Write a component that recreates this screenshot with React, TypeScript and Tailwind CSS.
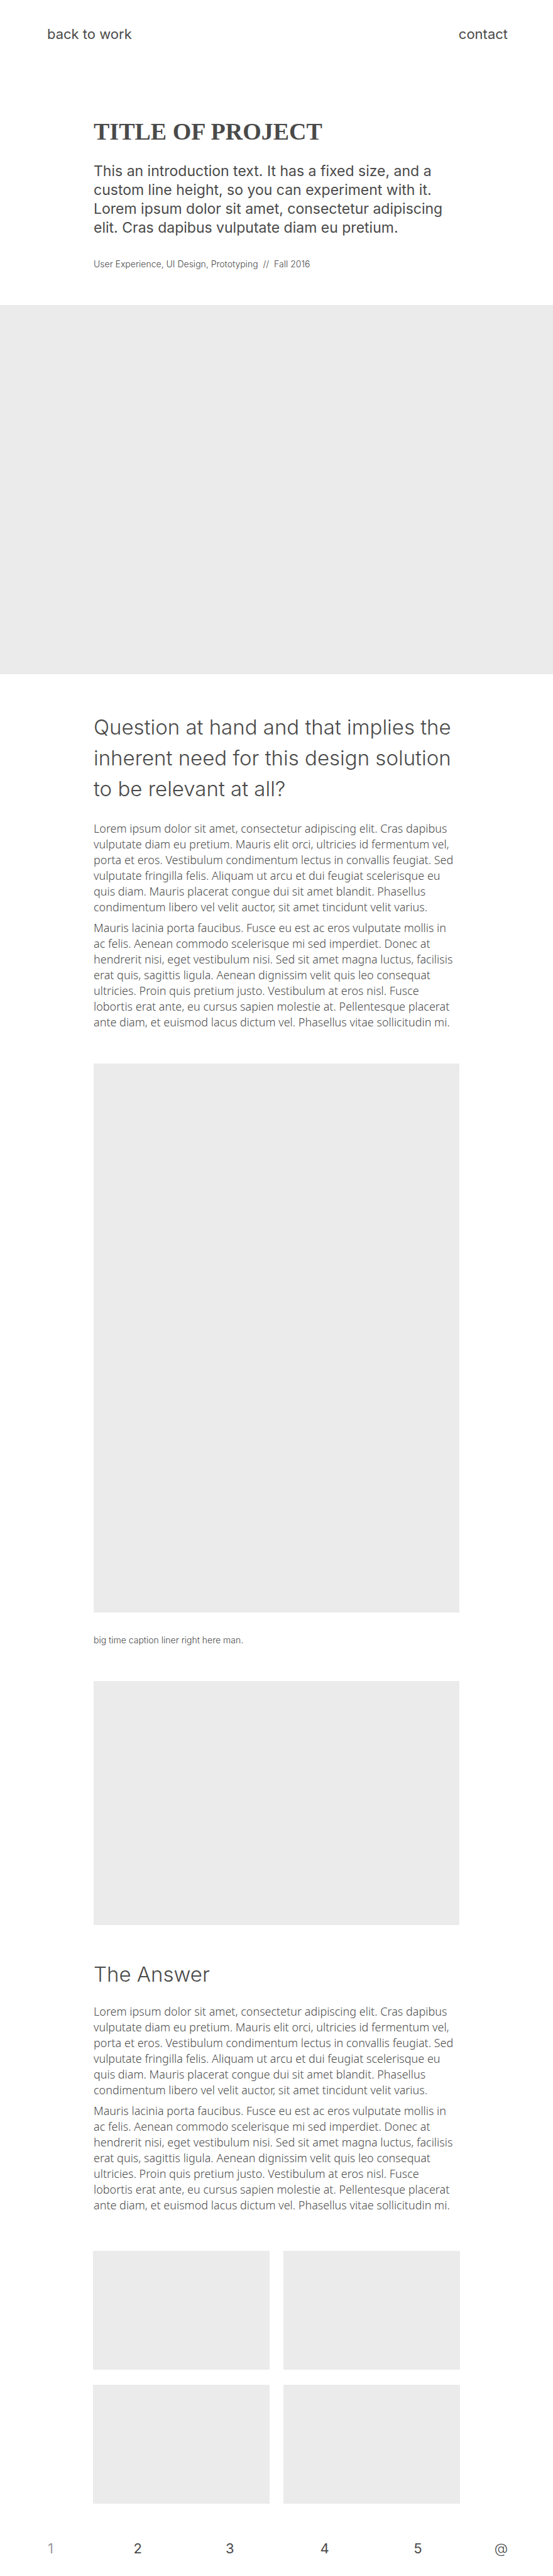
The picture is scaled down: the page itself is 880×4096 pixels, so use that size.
import type { ReactNode } from 'react';

function Heading({ children }: { children: ReactNode }) {
  return <h2 className="text-[33px] leading-[49px] font-light">{children}</h2>;
}

function Note({ children }: { children: ReactNode }) {
  return <p className="text-sm leading-5 font-light">{children}</p>;
}

function BodyCopy() {
  return (
    <div className="flex flex-col gap-2 font-['Noto_Sans',sans-serif] text-lg leading-[25px] font-light">
      <p>
        Lorem ipsum dolor sit amet, consectetur adipiscing elit. Cras dapibus
        <br />
        vulputate diam eu pretium. Mauris elit orci, ultricies id fermentum vel,
        <br />
        porta et eros. Vestibulum condimentum lectus in convallis feugiat. Sed
        <br />
        vulputate fringilla felis. Aliquam ut arcu et dui feugiat scelerisque eu
        <br />
        quis diam. Mauris placerat congue dui sit amet blandit. Phasellus
        <br />
        condimentum libero vel velit auctor, sit amet tincidunt velit varius.
      </p>
      <p>
        Mauris lacinia porta faucibus. Fusce eu est ac eros vulputate mollis in
        <br />
        ac felis. Aenean commodo scelerisque mi sed imperdiet. Donec at
        <br />
        hendrerit nisi, eget vestibulum nisi. Sed sit amet magna luctus, facilisis
        <br />
        erat quis, sagittis ligula. Aenean dignissim velit quis leo consequat
        <br />
        ultricies. Proin quis pretium justo. Vestibulum at eros nisl. Fusce
        <br />
        lobortis erat ante, eu cursus sapien molestie at. Pellentesque placerat
        <br />
        ante diam, et euismod lacus dictum vel. Phasellus vitae sollicitudin mi.
      </p>
    </div>
  );
}

const projects = ['2', '3', '4', '5'];
const tiles = [1, 2, 3, 4];

export default function App() {
  return (
    <div className="bg-white font-['Inter',sans-serif] text-[#4a4a4a]">
      <nav className="flex justify-between pt-[39px] pr-[72px] pl-[75px] text-[22px] leading-[30px]">
        <a href="#work">back to work</a>
        <a href="#contact">contact</a>
      </nav>

      <header className="mx-auto max-w-[582px] pt-[120px] pb-[55px]">
        <h1 className="font-['Liberation_Serif',serif] text-[38px] leading-10 font-bold">
          TITLE OF PROJECT
        </h1>
        <p className="mt-7 mb-[33px] text-[23px] leading-[30px]">
          This an introduction text. It has a fixed size, and a
          <br />
          custom line height, so you can experiment with it.
          <br />
          Lorem ipsum dolor sit amet, consectetur adipiscing
          <br />
          elit. Cras dapibus vulputate diam eu pretium.
        </p>
        <Note>User Experience, UI Design, Prototyping&nbsp; //&nbsp; Fall 2016</Note>
      </header>

      <div className="aspect-[880/587] bg-[#ebebeb]" />

      <main className="mx-auto max-w-[582px]">
        <section className="flex flex-col gap-[26px] pt-[60px] pb-[53px]">
          <Heading>
            Question at hand and that implies the
            <br />
            inherent need for this design solution
            <br />
            to be relevant at all?
          </Heading>
          <BodyCopy />
        </section>

        <figure>
          <div className="aspect-[2/3] bg-[#ebebeb]" />
          <figcaption className="pt-[34px] pb-[55px]">
            <Note>big time caption liner right here man.</Note>
          </figcaption>
        </figure>
        <div className="aspect-[3/2] bg-[#ebebeb]" />

        <section className="flex flex-col gap-[22px] pt-[54px] pb-[60px]">
          <Heading>The Answer</Heading>
          <BodyCopy />
        </section>

        <div className="-mx-px grid grid-cols-2 gap-x-[22px] gap-y-6">
          {tiles.map((tile) => (
            <div key={tile} className="aspect-[281/189] bg-[#ebebeb]" />
          ))}
        </div>
      </main>

      <footer className="grid grid-cols-[136fr_146fr_150fr_148fr_128fr_auto] pt-14 pr-[72px] pb-7 pl-[76px] text-[22px] leading-[30px]">
        <a href="#1" className="text-[#9b9b9b]">
          1
        </a>
        {projects.map((n) => (
          <a key={n} href={`#${n}`}>
            {n}
          </a>
        ))}
        <a href="#contact" className="font-light">
          @
        </a>
      </footer>
    </div>
  );
}
